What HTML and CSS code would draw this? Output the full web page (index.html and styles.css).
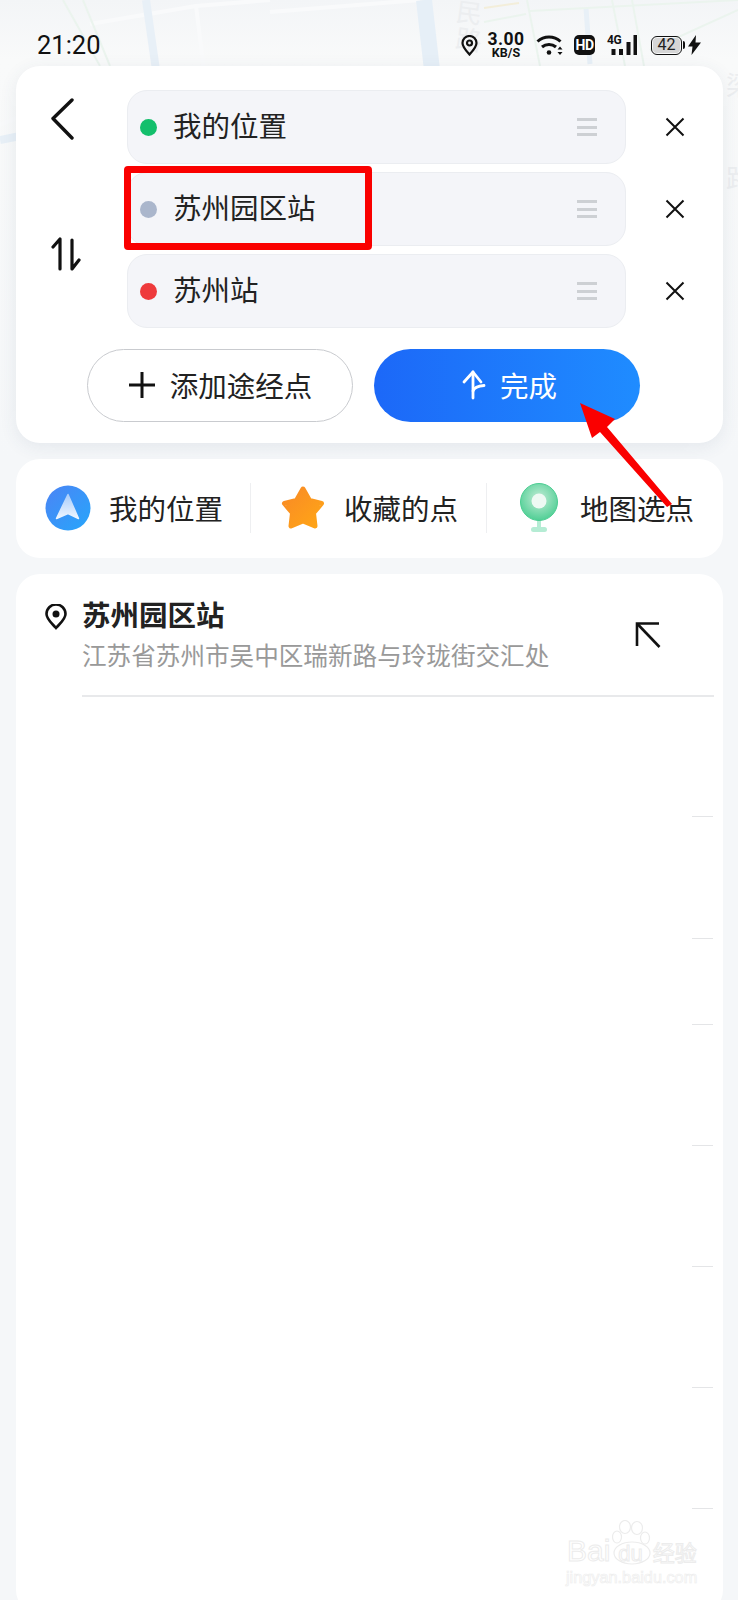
FILE: index.html
```html
<!DOCTYPE html>
<html lang="zh-CN">
<head>
    <meta charset="UTF-8">
    <meta name="viewport" content="width=device-width, initial-scale=1.0">
    <title>路线规划</title>
    <link rel="stylesheet" href="styles.css">
</head>
<body>
    <div class="screen">
        <!-- faint map behind the status bar -->
        <svg class="map" width="738" height="460" viewBox="0 0 738 460" fill="none">
            <g stroke="#f9fafb" stroke-width="4">
                <path d="M90 24L196 6 270 0"/>
                <path d="M196 6L204 70"/>
                <path d="M270 12L420 0"/>
                <path d="M0 125L40 108"/>
            </g>
            <g stroke="#e8f0f7" stroke-width="8">
                <path d="M146 0L156 70"/>
                <path d="M0 140L20 136"/>
                <path d="M586 8L590 64" stroke-width="5"/>
            </g>
            <path d="M424 0L432 70" stroke="#e6eff7" stroke-width="16"/>
            <g stroke="#ebf4ee" stroke-width="2">
                <path d="M63 0L100 66"/>
                <path d="M83 0L110 66"/>
                <path d="M527 0L540 66"/>
                <path d="M612 0L625 66"/>
                <path d="M632 0L644 66"/>
                <path d="M484 22L526 14"/>
                <path d="M530 11L738 0"/>
                <path d="M650 50L738 10"/>
            </g>
            <path d="M484 8L519 3" stroke="#f3eeda" stroke-width="2"/>
            <text class="map-label" transform="rotate(8 466 14)" x="456" y="22">民</text>
            <text class="map-label" transform="rotate(8 466 38)" x="456" y="49">路</text>
            <text class="map-label" x="726" y="95">梁</text>
            <text class="map-label" x="726" y="188">路</text>
        </svg>

        <div class="status-bar">
            <span class="clock">21:20</span>
            <div class="status-icons">
                <svg class="st-pin" width="17" height="21" viewBox="0 0 17 21" fill="none" stroke="#111" stroke-width="2.200">
                    <path d="M8.500 19.500C5 15.500 1.500 12 1.500 8a7 7 0 0 1 14 0C15.500 12 12 15.500 8.500 19.500Z"/>
                    <circle cx="8.500" cy="8" r="2.500"/>
                </svg>
                <div class="speed"><b>3.00</b><small>KB/S</small></div>
                <svg class="wifi" width="27" height="20" viewBox="0 0 27 20" fill="none" stroke="#111" stroke-width="3">
                    <path d="M1.500 6.500C8 .5 18 .5 24.500 6.500"/>
                    <path d="M6 12C10 8.500 16 8.500 20 12"/>
                    <circle cx="13" cy="17.500" r="2.300" fill="#111" stroke="none"/>
                    <path d="M24 11.500l-2.500 3h5zM24 20l-2.500-3h5z" fill="#111" stroke="none"/>
                </svg>
                <span class="hd">HD</span>
                <div class="signal">
                    <small>4G</small>
                    <svg width="30" height="20" viewBox="0 0 30 20" fill="#111">
                        <rect x="4.500" y="14" width="4" height="6"/>
                        <rect x="12" y="14" width="4" height="6"/>
                        <rect x="19.500" y="7" width="4" height="13"/>
                        <rect x="26.500" y="0" width="3.500" height="20"/>
                    </svg>
                </div>
                <div class="battery"><span>42</span></div>
                <svg class="bolt" width="13" height="20" viewBox="0 0 13 20" fill="#111">
                    <path d="M8 0L0 11.500h4.500L3.500 20 13 7.500H7.500Z"/>
                </svg>
            </div>
        </div>

        <section class="card route-card">
            <div class="route-top">
                <div class="route-side">
                    <svg class="back" width="28" height="42" viewBox="0 0 28 42" fill="none" stroke="#111" stroke-width="3.400" stroke-linecap="round" stroke-linejoin="round">
                        <path d="M22 2L3 20.500 22 40"/>
                    </svg>
                    <svg class="swap" width="30" height="34" viewBox="0 0 30 34" fill="none" stroke="#111" stroke-width="3.200" stroke-linecap="round" stroke-linejoin="round">
                        <path d="M2 10L9 2V32"/>
                        <path d="M21 3V32L28 23"/>
                    </svg>
                </div>
                <div class="stops">
                    <div class="stop-line">
                        <div class="stop"><i class="dot dot-green"></i><span>我的位置</span><i class="drag"></i></div>
                        <svg class="close" width="20" height="20" viewBox="0 0 20 20" stroke="#111" stroke-width="2"><path d="M1.500 1.500L18.500 18.500M18.500 1.500L1.500 18.500"/></svg>
                    </div>
                    <div class="stop-line">
                        <div class="stop"><i class="dot dot-grey"></i><span>苏州园区站</span><i class="drag"></i></div>
                        <svg class="close" width="20" height="20" viewBox="0 0 20 20" stroke="#111" stroke-width="2"><path d="M1.500 1.500L18.500 18.500M18.500 1.500L1.500 18.500"/></svg>
                    </div>
                    <div class="stop-line">
                        <div class="stop"><i class="dot dot-red"></i><span>苏州站</span><i class="drag"></i></div>
                        <svg class="close" width="20" height="20" viewBox="0 0 20 20" stroke="#111" stroke-width="2"><path d="M1.500 1.500L18.500 18.500M18.500 1.500L1.500 18.500"/></svg>
                    </div>
                </div>
            </div>
            <div class="route-actions">
                <button class="btn btn-add">
                    <svg width="28" height="28" viewBox="0 0 28 28" stroke="#111" stroke-width="3"><path d="M14 1V27M1 14H27"/></svg>
                    添加途经点
                </button>
                <button class="btn btn-done">
                    <svg width="24" height="30" viewBox="0 0 24 30" fill="none" stroke="#fff" stroke-width="2.800" stroke-linecap="round" stroke-linejoin="round">
                        <path d="M2 12L11 2 19 12"/>
                        <path d="M11 2V28"/>
                        <path d="M11 21C12 18 16 16 22 15.500"/>
                    </svg>
                    完成
                </button>
            </div>
        </section>

        <section class="card shortcuts">
            <div class="shortcut">
                <svg width="46" height="46" viewBox="0 0 46 46">
                    <defs>
                        <linearGradient id="locBg" x1="0" y1="0" x2="1" y2="1">
                            <stop offset="0" stop-color="#4c84f5"/>
                            <stop offset="1" stop-color="#26a6fb"/>
                        </linearGradient>
                        <linearGradient id="locArrow" x1="0" y1="0" x2="0" y2="1">
                            <stop offset="0" stop-color="#a9cdfb"/>
                            <stop offset="1" stop-color="#eef6ff"/>
                        </linearGradient>
                    </defs>
                    <circle cx="23" cy="23" r="22.500" fill="url(#locBg)"/>
                    <path d="M23 9.500L33.500 33.500 23 28.500 11.500 33.500Z" fill="url(#locArrow)" stroke="url(#locArrow)" stroke-width="1.500" stroke-linejoin="round"/>
                </svg>
                <span>我的位置</span>
            </div>
            <div class="shortcut">
                <svg width="46" height="46" viewBox="0 0 46 46">
                    <defs>
                        <linearGradient id="starBg" x1="0" y1="0" x2="1" y2="1">
                            <stop offset="0" stop-color="#f98a26"/>
                            <stop offset="1" stop-color="#ffa616"/>
                        </linearGradient>
                    </defs>
                    <path d="M23 4L29.500 15.500 41.500 18.500 33.500 28 35 41 23 36 11 41 12.500 28 4.500 18.500 16.500 15.500Z" fill="url(#starBg)" stroke="url(#starBg)" stroke-width="5" stroke-linejoin="round"/>
                </svg>
                <span>收藏的点</span>
            </div>
            <div class="shortcut">
                <svg width="40" height="50" viewBox="0 0 40 50">
                    <defs>
                        <radialGradient id="pinBg" cx="0.500" cy="0.400" r="0.600">
                            <stop offset="0" stop-color="#c3ecd6"/>
                            <stop offset="1" stop-color="#50cf95"/>
                        </radialGradient>
                    </defs>
                    <rect x="11" y="44" width="16" height="5" rx="2.500" fill="#b5ecd4"/>
                    <rect x="17" y="36" width="4" height="10" fill="#b5ecd4"/>
                    <circle cx="19" cy="19" r="18.500" fill="url(#pinBg)" stroke="#4ccd92" stroke-width="1"/>
                    <circle cx="19" cy="18" r="7.500" fill="#eef9f3"/>
                </svg>
                <span>地图选点</span>
            </div>
        </section>

        <section class="card results">
            <div class="result">
                <svg class="result-pin" width="22" height="26" viewBox="0 0 22 26" fill="none" stroke="#111" stroke-width="2.600">
                    <path d="M11 24C6 18.500 1.500 15 1.500 10a9.500 9.500 0 0 1 19 0C20.500 15 16 18.500 11 24Z"/>
                    <circle cx="11" cy="10" r="3.500" fill="#111" stroke="none"/>
                </svg>
                <div class="result-text">
                    <h3>苏州园区站</h3>
                    <p>江苏省苏州市吴中区瑞新路与玲珑街交汇处</p>
                </div>
                <svg class="result-go" width="26" height="26" viewBox="0 0 26 26" fill="none" stroke="#111" stroke-width="2.600">
                    <path d="M24 1.500H2V24"/>
                    <path d="M2.500 2L24.500 25"/>
                </svg>
            </div>
            <div class="list-rule"></div>
            <!-- short ends of the empty rows -->
            <div class="stubs">
                <i></i><i></i><i></i><i></i><i></i><i></i><i></i>
            </div>
        </section>

        <!-- hand-drawn marks on top of the page -->
        <div class="mark-box"></div>
        <svg class="mark-arrow" width="100" height="110" viewBox="0 0 100 110" fill="#fa0000">
            <path d="M0 0L35 16 27 24 92 101 87 104 20 29 12 35Z"/>
        </svg>

        <div class="watermark">
            <svg class="paw" width="40" height="46" viewBox="0 0 40 46" fill="none" stroke="#ececec" stroke-width="1.200">
                <ellipse cx="13" cy="7" rx="5.500" ry="6.500"/>
                <ellipse cx="25" cy="8" rx="5.500" ry="6.500"/>
                <ellipse cx="5" cy="17" rx="4.500" ry="6"/>
                <ellipse cx="33" cy="18" rx="4.500" ry="6"/>
                <ellipse cx="20" cy="33" rx="18" ry="11"/>
            </svg>
            <div class="wm-main">Bai<span class="wm-du">du</span><span class="wm-cn">经验</span></div>
            <div class="wm-url">jingyan.baidu.com</div>
        </div>
    </div>
</body>
</html>
```

FILE: styles.css
```css
* {
    box-sizing: border-box;
}
body {
    margin: 0;
    font-family: "Noto Sans CJK SC", "Noto Sans", sans-serif;
    color: #222;
}
.screen {
    position: relative;
    width: 738px;
    height: 1600px;
    overflow: hidden;
    padding: 0 15px 0 16px;
    background: linear-gradient(180deg, #f3f5f7 0, #f9fafa 60px, #f5f7f9 460px);
}
.map {
    position: absolute;
    left: 0;
    top: 0;
}
.map-label {
    font-size: 26px;
    fill: #eceef0;
}

/* status bar */
.status-bar {
    position: relative;
    height: 66px;
    padding: 24px 22px 0 21px;
    display: flex;
    justify-content: space-between;
    align-items: center;
}
.clock {
    font-family: "Roboto", sans-serif;
    font-size: 25.5px;
    color: #111;
}
.status-icons {
    display: flex;
    align-items: center;
}
.speed {
    width: 32px;
    margin-left: 12px;
    display: flex;
    flex-direction: column;
    align-items: center;
    font-family: "Roboto", sans-serif;
    color: #111;
    line-height: 1;
}
.speed b {
    font-size: 17.5px;
    line-height: 15px;
    font-weight: 700;
    letter-spacing: 0.4px;
}
.speed small {
    font-size: 12.5px;
    line-height: 12px;
    font-weight: 700;
}
.wifi {
    margin-left: 14px;
}
.hd {
    width: 21px;
    height: 20px;
    margin-left: 11px;
    border-radius: 5px;
    background: #111;
    color: #fff;
    font: 700 14px/20px "Roboto", sans-serif;
    letter-spacing: -0.5px;
    text-align: center;
}
.signal {
    position: relative;
    width: 30px;
    height: 20px;
    margin-left: 12px;
    display: flex;
}
.signal small {
    position: absolute;
    left: 0;
    top: -1px;
    font: 700 12px/12px "Roboto", sans-serif;
    letter-spacing: -0.5px;
    color: #111;
}
.battery {
    position: relative;
    width: 31px;
    height: 19px;
    margin-left: 14px;
    border: 1.5px solid #111;
    border-radius: 6px;
    padding: 1px;
}
.battery::after {
    content: "";
    position: absolute;
    right: -3.5px;
    top: 4px;
    width: 2px;
    height: 8px;
    border-radius: 0 2px 2px 0;
    background: #111;
}
.battery span {
    display: block;
    height: 100%;
    border-radius: 4px;
    background: #d6d6d6;
    font: 400 16px/14px "Roboto", sans-serif;
    text-align: center;
    color: #222;
}
.bolt {
    margin-left: 6px;
}

.card {
    position: relative;
    background: #fff;
    border-radius: 24px;
}

/* route card */
.route-card {
    height: 377px;
    padding: 24px 0 0;
    box-shadow: 0 4px 18px rgba(60, 80, 110, 0.09);
}
.route-top {
    display: flex;
}
.route-side {
    width: 111px;
    padding: 8px 0 0 34px;
    display: flex;
    flex-direction: column;
}
.back {
    display: block;
}
.swap {
    display: block;
    margin-top: 97px;
    margin-left: 1px;
}
.stops {
    display: flex;
    flex-direction: column;
    gap: 8px;
}
.stop-line {
    display: flex;
    align-items: center;
}
.stop {
    width: 499px;
    height: 74px;
    padding: 0 28px 0 12px;
    display: flex;
    align-items: center;
    background: #f4f5f9;
    border: 1px solid #ebedf1;
    border-radius: 20px;
    font-size: 28.5px;
}
.stop span {
    flex: 1;
    margin-left: 16px;
    padding-bottom: 6px;
}
.dot {
    width: 17px;
    height: 17px;
    border-radius: 50%;
    flex: none;
}
.dot-green {
    background: #13bf6c;
}
.dot-grey {
    background: #aab6cc;
}
.dot-red {
    background: #ee3a3c;
}
.drag {
    width: 20px;
    height: 18px;
    border-top: 3px solid #cdd0d4;
    border-bottom: 3px solid #cdd0d4;
    position: relative;
}
.drag::after {
    content: "";
    position: absolute;
    left: 0;
    right: 0;
    top: 4.500px;
    height: 3px;
    background: #cdd0d4;
}
.close {
    margin-left: 39px;
    flex: none;
}
.route-actions {
    margin-top: 21px;
    padding-left: 71px;
    display: flex;
    gap: 21px;
}
.btn {
    width: 266px;
    height: 73px;
    border-radius: 37px;
    display: flex;
    align-items: center;
    justify-content: center;
    gap: 14px;
    font-family: inherit;
    font-size: 28.5px;
    padding: 0 0 2px;
}
.btn-add {
    background: #fff;
    border: 1px solid #c9cbcf;
    color: #222;
}
.btn-done {
    border: none;
    padding-left: 5px;
    background: linear-gradient(90deg, #1c68f8, #1f8cff);
    color: #fff;
}

/* quick picks */
.shortcuts {
    margin-top: 16px;
    height: 99px;
    display: flex;
    padding-left: 29px;
}
.shortcut {
    height: 50px;
    margin-top: 24px;
    display: flex;
    align-items: center;
    gap: 18px;
    font-size: 28.5px;
    border-right: 1px solid #eeeff1;
}
.shortcut span {
    padding-bottom: 2px;
}
.shortcut:nth-child(1) {
    width: 206px;
}
.shortcut:nth-child(2) {
    width: 236px;
    padding-left: 29px;
}
.shortcut:nth-child(3) {
    padding-left: 33px;
    border-right: none;
    gap: 20px;
}

/* search results */
.results {
    margin-top: 16px;
    height: 1040px;
}
.result {
    display: flex;
    padding: 22px 0 0 29px;
    height: 121px;
}
.result-pin {
    margin-top: 8px;
    flex: none;
}
.result-text {
    margin-left: 15px;
    width: 553px;
}
.result-text h3 {
    margin: 0;
    font-size: 28.5px;
    line-height: 36px;
    font-weight: 700;
}
.result-text p {
    margin: 5px 0 0;
    font-size: 24.6px;
    line-height: 34px;
    color: #999;
    white-space: nowrap;
}
.result-go {
    margin: 26px 0 0 0;
    flex: none;
}
.list-rule {
    height: 2px;
    margin-left: 66px;
    margin-right: 9px;
    background: #e8e9eb;
}
.stubs {
    margin: 119px 10px 0 auto;
    width: 21px;
    display: grid;
    grid-template-rows: 122px 86px 121px 121px 121px 121px auto;
}
.stubs i {
    display: block;
    height: 1px;
    background: #e4e5e7;
}

/* markup drawn over the page */
.mark-box {
    position: absolute;
    left: 124px;
    top: 166px;
    width: 248px;
    height: 84px;
    border: 7px solid #fa0000;
    border-radius: 4px;
}
.mark-arrow {
    position: absolute;
    left: 580px;
    top: 403px;
}

.watermark {
    position: absolute;
    left: 566px;
    top: 1520px;
    width: 140px;
    height: 66px;
    color: transparent;
    font-family: "Liberation Sans", sans-serif;
}
.paw {
    position: absolute;
    left: 46px;
    top: 0;
}
.wm-main {
    position: absolute;
    left: 1px;
    top: 13px;
    font-size: 30px;
    line-height: 36px;
    -webkit-text-stroke: 1px #ececec;
    white-space: nowrap;
}
.wm-du {
    font-size: 22px;
    margin-left: 8px;
}
.wm-cn {
    font-family: "Noto Sans CJK SC", sans-serif;
    font-size: 22px;
    margin-left: 10px;
}
.wm-url {
    position: absolute;
    left: 0;
    top: 47px;
    font-size: 16.300px;
    line-height: 20px;
    -webkit-text-stroke: 0.7px #eeeeee;
    white-space: nowrap;
}
```
